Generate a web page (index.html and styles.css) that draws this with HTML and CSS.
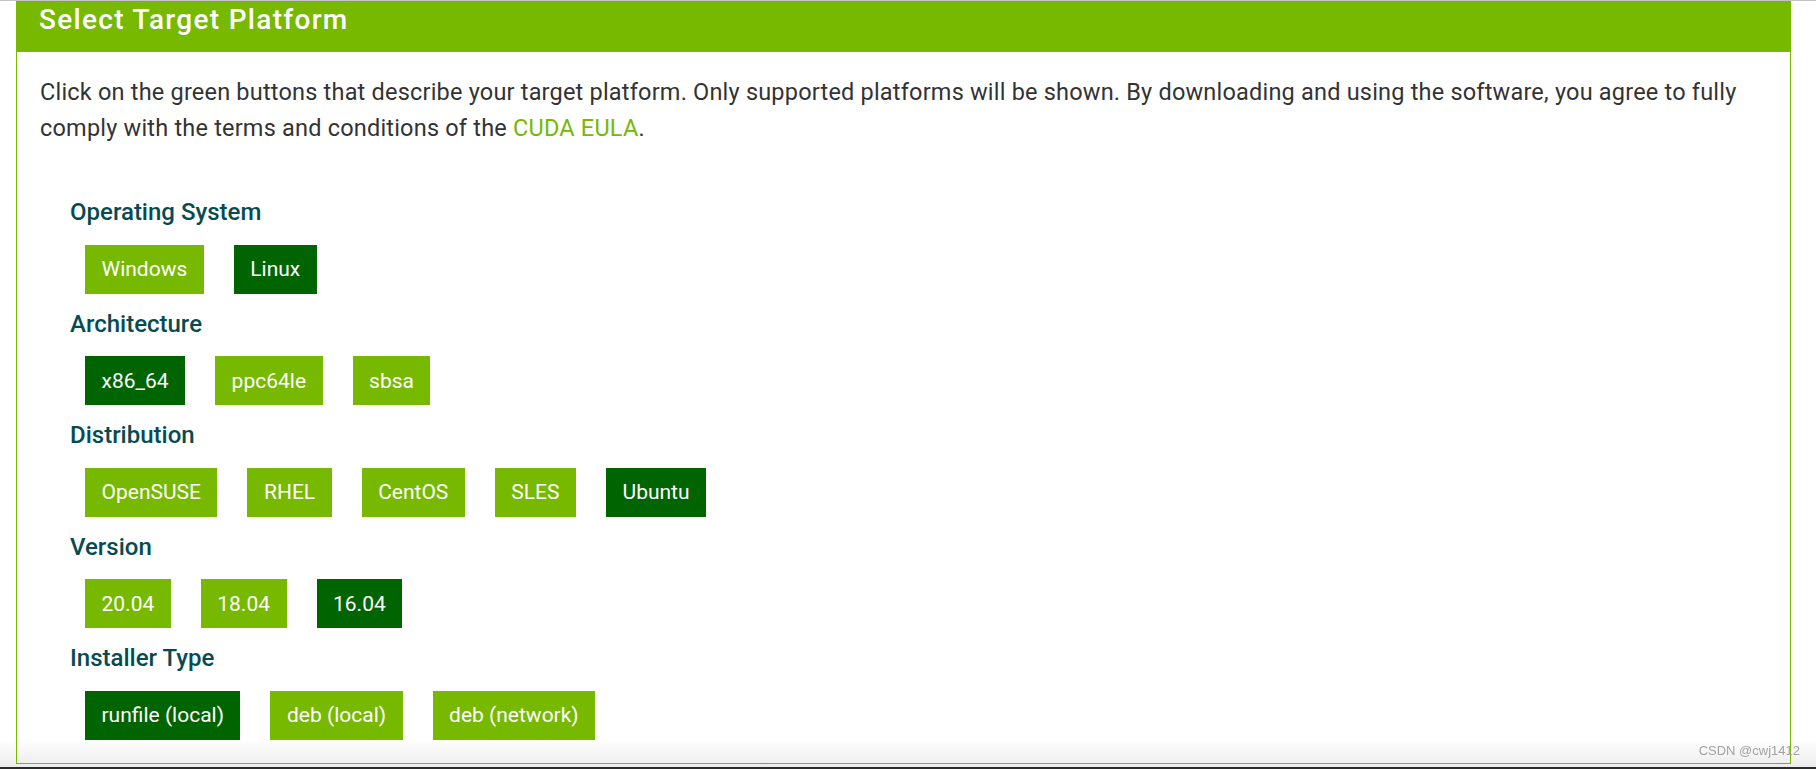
FILE: index.html
```html
<!DOCTYPE html>
<html lang="en">
<head>
    <meta charset="UTF-8">
    <meta name="viewport" content="width=device-width, initial-scale=1.0">
    <title>CUDA Toolkit Downloads</title>
    <link rel="stylesheet" href="styles.css">
</head>
<body>
    <div class="panel">
        <div class="panel-title">Select Target Platform</div>
        <div class="panel-body">
            <p class="intro">Click on the green buttons that describe your target platform. Only supported platforms will be shown. By downloading and using the software, you agree to fully comply with the terms and conditions of the <a href="#" class="eula">CUDA EULA</a>.</p>

            <div class="selector">
                <div class="selector-row">
                    <div class="row-label">Operating System</div>
                    <div class="row-options">
                        <span class="option">Windows</span>
                        <span class="option selected">Linux</span>
                    </div>
                </div>
                <div class="selector-row">
                    <div class="row-label">Architecture</div>
                    <div class="row-options">
                        <span class="option selected">x86_64</span>
                        <span class="option">ppc64le</span>
                        <span class="option">sbsa</span>
                    </div>
                </div>
                <div class="selector-row">
                    <div class="row-label">Distribution</div>
                    <div class="row-options">
                        <span class="option">OpenSUSE</span>
                        <span class="option">RHEL</span>
                        <span class="option">CentOS</span>
                        <span class="option">SLES</span>
                        <span class="option selected">Ubuntu</span>
                    </div>
                </div>
                <div class="selector-row">
                    <div class="row-label">Version</div>
                    <div class="row-options">
                        <span class="option">20.04</span>
                        <span class="option">18.04</span>
                        <span class="option selected">16.04</span>
                    </div>
                </div>
                <div class="selector-row">
                    <div class="row-label">Installer Type</div>
                    <div class="row-options">
                        <span class="option selected">runfile (local)</span>
                        <span class="option">deb (local)</span>
                        <span class="option">deb (network)</span>
                    </div>
                </div>
            </div>
        </div>
    </div>

    <div class="watermark">CSDN @cwj1412</div>
</body>
</html>
```

FILE: styles.css
```css
* {
    box-sizing: border-box;
}

html,
body {
    height: 100%;
}

body {
    margin: 0;
    padding: 0 25px 3px 16px;
    display: flex;
    flex-direction: column;
    overflow: hidden;
    border-top: 1px solid #c4c4c4;
    border-bottom: 2px solid #2b2b2b;
    background: linear-gradient(to bottom, #fff calc(100% - 30px), #ebebeb 100%);
    font-family: Roboto, "Liberation Sans", sans-serif;
}

.panel {
    flex: 1;
    border: 1px solid #76b900;
    border-top: none;
}

.panel-title {
    height: 51px;
    margin: 0 -1px;
    padding: 4px 23px 0;
    background: #76b900;
    color: #fff;
    font-size: 28px;
    font-weight: 500;
    letter-spacing: 1.3px;
    line-height: 30px;
}

.panel-body {
    padding: 0 0 0 23px;
}

.intro {
    margin: 21.5px 0 0;
    padding-right: 20px;
    color: #333;
    font-size: 23.5px;
    letter-spacing: 0.2px;
    line-height: 36px;
}

.eula {
    color: #76b900;
    text-decoration: none;
}

.selector {
    margin-top: 51.8px;
    padding-left: 30px;
}

.selector-row {
    margin-bottom: 15px;
}

.row-label {
    color: #074b52;
    font-size: 24px;
    font-weight: 500;
    line-height: 30px;
    margin-bottom: 17.5px;
}

.row-options {
    display: flex;
    gap: 30px;
    padding-left: 15px;
}

.option {
    display: flex;
    align-items: center;
    height: 49px;
    padding: 0 16.5px;
    background: #76b900;
    color: #fff;
    font-size: 21px;
}

.option.selected {
    background: #006400;
}

.watermark {
    position: fixed;
    right: 16px;
    bottom: 11px;
    color: #a3a3a3;
    font-family: "Liberation Sans", Arial, sans-serif;
    font-size: 13px;
}
```
